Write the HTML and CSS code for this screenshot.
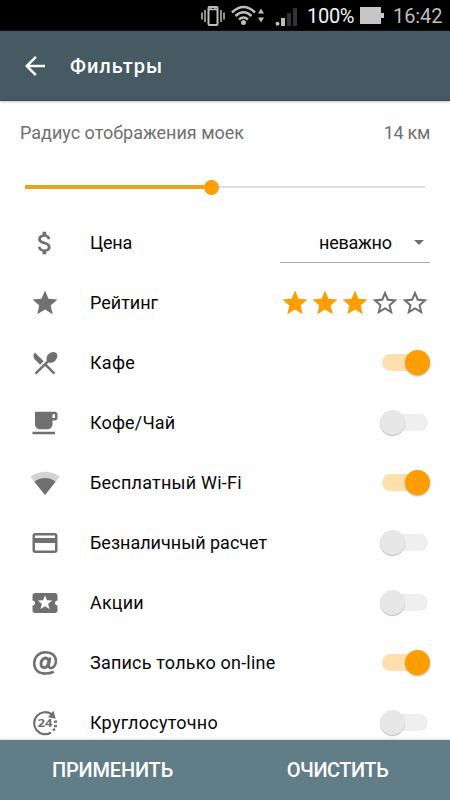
FILE: index.html
```html
<!DOCTYPE html>
<html lang="ru">
<head>
<meta charset="utf-8">
<title>Фильтры</title>
<link rel="stylesheet" href="styles.css">
</head>
<body>
<svg class="defs" width="0" height="0">
  <symbol id="star" viewBox="0 0 24 24"><path d="M12 17.27L18.18 21l-1.64-7.03L22 9.24l-7.19-.61L12 2 9.19 8.63 2 9.24l5.46 4.73L5.82 21z"/></symbol>
  <symbol id="star-o" viewBox="0 0 24 24"><path d="M22 9.24l-7.19-.62L12 2 9.19 8.63 2 9.24l5.46 4.73L5.82 21 12 17.27 18.18 21l-1.63-7.03L22 9.24zM12 15.4l-3.76 2.27 1-4.28-3.32-2.88 4.38-.38L12 6.1l1.71 4.04 4.38.38-3.32 2.88 1 4.28L12 15.4z"/></symbol>
</svg>
<div class="screen">
  <div class="status">
    <svg class="status-icons" viewBox="0 0 100 31" width="100" height="31">
      <g fill="none" stroke="#bdbdbd">
        <rect x="8.500" y="7" width="9" height="18" rx="1" stroke-width="2"/>
        <path d="M8.500 9.500h9M11 7v2M15 7v2" stroke-width="1.500"/>
        <path d="M5 10v12M2 12.500v7M21 10v12M24 12.500v7" stroke-width="1.500"/>
        <path d="M32 12.500Q43.500 1.500 55 12.500M35.500 16Q43.500 8.500 51.500 16M39 19.500Q43.500 15.500 48 19.500" stroke-width="2.500"/>
      </g>
      <g fill="#bdbdbd">
        <circle cx="43.500" cy="22.500" r="2.500"/>
        <path d="M58 13.500l3-5 3 5zM58 17.500h6l-3 5z"/>
        <circle cx="77.500" cy="23.800" r="2"/><path d="M81 18h4v8h-4z"/>
        <path d="M87 13h4v13h-4zM93 8h4v18h-4z" fill="#333"/>
      </g>
    </svg>
    <span class="percent">100%</span>
    <svg class="battery" viewBox="0 0 24 18" width="24" height="18"><path fill="#c6c6c6" d="M0 0h21v6h3v5h-3v6H0z"/></svg>
    <span class="clock">16:42</span>
  </div>
  <header class="bar">
    <svg viewBox="0 0 24 24" width="30" height="30" fill="#fff"><path d="M20 11H7.830l5.590-5.590L12 4l-8 8 8 8 1.410-1.410L7.830 13H20v-2z"/></svg>
    <h1 class="title">Фильтры</h1>
  </header>
  <main class="content">
    <div class="radius"><span class="radius-name">Радиус отображения моек</span><span class="radius-value">14 км</span></div>
    <div class="slider"><div class="done"></div><div class="knob"></div><div class="rest"></div></div>
    <div class="row">
      <svg class="icon" viewBox="0 0 24 24"><path d="M11.800 10.900c-2.270-.59-3-1.200-3-2.150 0-1.090 1.010-1.850 2.700-1.850 1.780 0 2.440.85 2.500 2.100h2.210c-.07-1.720-1.120-3.300-3.210-3.810V3h-3v2.160c-1.940.42-3.500 1.680-3.500 3.610 0 2.310 1.910 3.460 4.700 4.130 2.500.6 3 1.480 3 2.410 0 .69-.49 1.790-2.700 1.790-2.060 0-2.870-.92-2.980-2.100h-2.200c.12 2.190 1.760 3.420 3.680 3.830V21h3v-2.150c1.950-.37 3.500-1.500 3.500-3.550 0-2.840-2.430-3.810-4.700-4.400z"/></svg>
      <span class="label price">Цена</span>
      <div class="select"><span class="select-value">неважно</span><i class="caret"></i></div>
    </div>
    <div class="row">
      <svg class="icon"><use href="#star"/></svg>
      <span class="label rating">Рейтинг</span>
      <div class="stars"><svg><use href="#star"/></svg><svg><use href="#star"/></svg><svg><use href="#star"/></svg><svg class="empty"><use href="#star-o"/></svg><svg class="empty"><use href="#star-o"/></svg></div>
    </div>
    <div class="row">
      <svg class="icon" viewBox="0 0 24 24"><path d="M8.100 13.340l2.830-2.830L3.910 3.500c-1.560 1.560-1.560 4.090 0 5.660l4.190 4.180zm6.780-1.810c1.530.71 3.680.21 5.270-1.380 1.910-1.910 2.280-4.650.81-6.120-1.460-1.460-4.200-1.100-6.120.81-1.590 1.590-2.090 3.740-1.380 5.270L3.700 19.870l1.410 1.410L12 14.410l6.880 6.880 1.410-1.410L13.410 13l1.470-1.470z"/></svg>
      <span class="label cafe">Кафе</span><div class="switch on"></div>
    </div>
    <div class="row">
      <svg class="icon" viewBox="0 0 24 24"><path d="M20 3H4v10c0 2.210 1.790 4 4 4h6c2.210 0 4-1.790 4-4v-3h2c1.110 0 2-.9 2-2V5c0-1.110-.89-2-2-2zm0 5h-2V5h2v3zM2 21h18v-2H2v2z"/></svg>
      <span class="label coffee">Кофе/Чай</span><div class="switch"></div>
    </div>
    <div class="row">
      <svg class="icon" viewBox="0 0 24 24"><path opacity=".3" d="M12 21.500L23.640 7C23.190 6.660 18.710 3 12 3S.81 6.660.36 7z"/><path d="M3.530 10.950L12 21.500l8.470-10.550C20.040 10.620 16.810 8 12 8s-8.040 2.620-8.470 2.950z"/></svg>
      <span class="label wifi">Бесплатный Wi-Fi</span><div class="switch on"></div>
    </div>
    <div class="row">
      <svg class="icon" viewBox="0 0 24 24"><path d="M20 4H4c-1.110 0-1.990.89-1.990 2L2 18c0 1.110.89 2 2 2h16c1.110 0 2-.89 2-2V6c0-1.110-.89-2-2-2zm0 14H4v-6h16v6zm0-10H4V6h16v2z"/></svg>
      <span class="label card">Безналичный расчет</span><div class="switch"></div>
    </div>
    <div class="row">
      <svg class="icon" viewBox="0 0 24 24"><path d="M20 12c0-1.100.9-2 2-2V6c0-1.100-.9-2-2-2H4c-1.100 0-1.990.9-1.990 2v4c1.100 0 1.990.9 1.990 2s-.89 2-2 2v4c0 1.100.9 2 2 2h16c1.100 0 2-.9 2-2v-4c-1.100 0-2-.9-2-2zm-4.420 4.800L12 14.500l-3.580 2.300 1.080-4.120-3.290-2.690 4.240-.25L12 5.800l1.540 3.950 4.240.25-3.290 2.690 1.090 4.110z"/></svg>
      <span class="label promo">Акции</span><div class="switch"></div>
    </div>
    <div class="row">
      <svg class="icon" viewBox="0 0 30 30"><g fill="none" stroke="#707070"><path stroke-width="2.500" d="M23.800 23.600C21.500 25 19 25.600 15.500 25.600C8.500 25.600 4.200 21.500 4.200 15.300C4.200 9 9 4.300 15.700 4.300C22 4.300 25.900 8 25.900 12.900C25.900 17 23.600 20 21 20C19 20 18.400 18.700 18.700 17.200L20.200 9.400"/><ellipse cx="14.800" cy="14.900" rx="3.700" ry="4.900" stroke-width="3" transform="rotate(20 15 15)"/></g></svg>
      <span class="label online">Запись только on-line</span><div class="switch on"></div>
    </div>
    <div class="row">
      <svg class="icon" viewBox="0 0 30 30"><path d="M21.500 6.200A11 11 0 1 0 21 24.500" fill="none" stroke="#707070" stroke-width="2.200"/><path d="M23.500 2.800l2.200 8-7.700-1.600zM24 12.500h3v2.300h-3zM24 17h3v2.300h-3zM22.200 21.200l2.300-1.200 1.200 2-2.300 1.300z"/><text class="day" x="7.500" y="18.500" textLength="15" lengthAdjust="spacingAndGlyphs">24</text></svg>
      <span class="label day-night">Круглосуточно</span><div class="switch"></div>
    </div>
  </main>
  <footer class="actions"><button class="apply">ПРИМЕНИТЬ</button><button class="clear">ОЧИСТИТЬ</button></footer>
</div>
</body>
</html>
```
FILE: styles.css
```css
* { box-sizing: border-box; }
body { margin: 0; font-family: Roboto, "Liberation Sans", sans-serif; background: #fefefe; color: #080808; }
.defs { display: block; }
.screen { width: 450px; height: 800px; display: flex; flex-direction: column; overflow: hidden; }
.status { flex: none; height: 31px; background: #000; display: flex; align-items: center; padding-left: 200px; }
.status-icons { flex: none; }
.percent { width: 53px; margin-left: 7px; flex: none; font-size: 20px; line-height: 33px; padding-top: 2px; color: #f4f4f4; letter-spacing: -0.3px; }
.battery { flex: none; }
.clock { margin-left: 9px; padding-top: 2px; font-size: 20px; line-height: 33px; color: #bdbdbd; letter-spacing: -0.1px; }
.bar { flex: none; position: relative; z-index: 1; height: 70px; background: #455a62; display: flex; align-items: center; padding-left: 20px; border-bottom: 1px solid #394c55; box-shadow: 0 1px 2px #bfc4d0; }
.title { margin: 0 0 0 20px; font-size: 20px; font-weight: 500; color: #fff; letter-spacing: 1px; }
.content { flex: 1; min-height: 0; overflow: hidden; }
.radius { display: flex; justify-content: space-between; height: 63px; padding: 0 20px; line-height: 63px; font-size: 18px; color: #707070; }
.radius-value { letter-spacing: -0.3px; }
.slider { display: flex; align-items: center; height: 46px; margin: 0 25px 3px; }
.done { width: 179px; height: 4px; background: #eea21c; }
.knob { width: 15px; height: 15px; border-radius: 50%; background: #fd9e00; }
.rest { flex: 1; height: 2px; background: #dedede; }
.row { display: flex; align-items: center; height: 60px; padding: 0 20px 0 30px; }
.icon { flex: none; width: 30px; height: 30px; fill: #707070; }
.label { flex: 1; margin-left: 30px; padding-bottom: 2px; font-size: 18px; white-space: nowrap; }
.price { letter-spacing: -0.2px; }
.cafe { letter-spacing: 0.3px; }
.coffee { letter-spacing: 0.15px; }
.wifi { letter-spacing: 0.22px; }
.promo { letter-spacing: 0.2px; }
.online { letter-spacing: 0.2px; }
.day-night { letter-spacing: 0.25px; }
.select { width: 150px; height: 40px; border-bottom: 1px solid #a8a8a8; display: flex; align-items: center; padding: 0 6px 0 39px; justify-content: space-between; font-size: 18px; letter-spacing: -0.25px; }
.caret { border: 5px solid transparent; border-top-color: #707070; border-bottom: 0; }
.stars { display: flex; width: 150px; }
.stars svg { width: 30px; height: 30px; fill: #fd9e00; }
.stars .empty { fill: #707070; }
.switch { position: relative; width: 50px; height: 26px; }
.switch::before { content: ""; position: absolute; left: 4px; top: 4px; width: 44px; height: 17px; border-radius: 9px; background: #efefef; }
.switch::after { content: ""; position: absolute; left: 0; top: 0; width: 25px; height: 25px; border-radius: 50%; background: #e7e7e7; box-shadow: 0 1px 1px #bbb; }
.switch.on::before { left: 2px; background: #fedfad; }
.switch.on::after { left: 25px; background: #fd9e00; box-shadow: 0 1px 2px #b9a88a; }
.day { font: 700 10px "Open Sans", sans-serif; fill: #707070; }
.actions { flex: none; position: relative; height: 60px; background: #607d88; display: flex; box-shadow: 0 -1px 2px #d4d9df; }
.actions button { flex: 1; padding: 0; border: 0; background: none; color: #fff; font: 500 20px Roboto, sans-serif; }
.actions .apply { letter-spacing: -0.2px; }
.actions .clear { letter-spacing: -0.5px; }
```
